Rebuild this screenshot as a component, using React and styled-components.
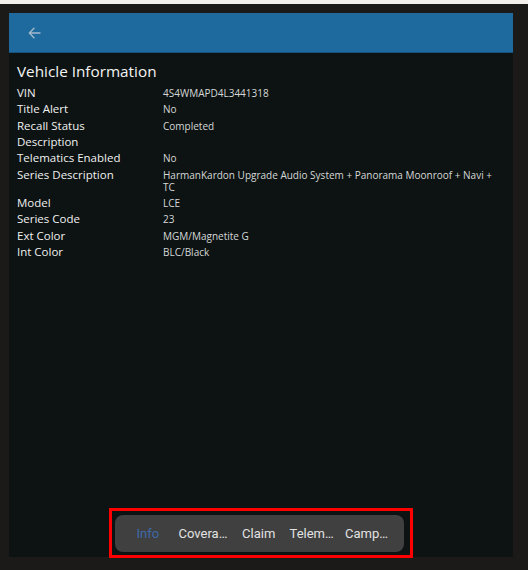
import React from "react";
import styled, { createGlobalStyle } from "styled-components";

const Global = createGlobalStyle`
  html, body { margin: 0; padding: 0; background: #1c1a19; }
  * { box-sizing: border-box; }
`;

const Page = styled.div`
  width: 528px;
  height: 570px;
  background: #1c1a19;
  border-top: 4px solid #f3f0ec;
  padding: 9px 15px 13px 9px;
  display: flex;
`;

const Screen = styled.div`
  flex: 1;
  display: flex;
  flex-direction: column;
  background: #0c1312;
  font-family: "Open Sans", "Noto Sans", sans-serif;
`;

const Header = styled.header`
  height: 40px;
  background: #1e6a9e;
  border-bottom: 1px solid #17527c;
  display: flex;
  align-items: center;
  padding-left: 18px;
  flex-shrink: 0;
`;

const BackButton = styled.button`
  border: 0;
  background: none;
  padding: 0;
  width: 14px;
  height: 14px;
  display: flex;
  align-items: center;
  justify-content: center;
`;

const Content = styled.main`
  padding: 8px 17px 0 8px;
  display: flex;
  flex-direction: column;
`;

const Title = styled.h1`
  margin: 0 0 4px;
  font-size: 15.3px;
  line-height: 20px;
  font-weight: 400;
  color: #f4f4f4;
`;

const Row = styled.div`
  display: grid;
  grid-template-columns: 146px 1fr;
  min-height: 16.33px;
`;

const Label = styled.div`
  font-size: 11.5px;
  line-height: 16.33px;
  color: #f0f0f0;
`;

const Value = styled.div`
  font-size: 10px;
  line-height: 12.5px;
  padding: 2px 0 1.3px;
  color: #d6d8d8;
`;

const Spacer = styled.div`
  flex: 1;
`;

const Annotation = styled.div`
  align-self: center;
  border: 3px solid #ff0000;
  padding: 4px 6px 3px 3px;
  margin-bottom: -1px;
`;

const TabBar = styled.nav`
  width: 289px;
  height: 37px;
  background: #404040;
  border-radius: 8px;
  display: flex;
  align-items: center;
  padding: 0 6px 0 5px;
`;

const Tab = styled.div`
  flex: 0 0 55.5px;
  padding: 0 3px;
  text-align: center;
  white-space: nowrap;
  overflow: hidden;
  text-overflow: ellipsis;
  font-family: Roboto, "Noto Sans", sans-serif;
  font-size: 13px;
  color: ${(p) => (p.$active ? "#3d6aa8" : "#e2e2e2")};
`;

const rows = [
  ["VIN", "4S4WMAPD4L3441318"],
  ["Title Alert", "No"],
  ["Recall Status", "Completed"],
  ["Description", ""],
  ["Telematics Enabled", "No"],
  ["Series Description", "HarmanKardon Upgrade Audio System + Panorama Moonroof + Navi + TC"],
  ["Model", "LCE"],
  ["Series Code", "23"],
  ["Ext Color", "MGM/Magnetite G"],
  ["Int Color", "BLC/Black"],
];

const tabs = ["Info", "Coverage", "Claim", "Telematics", "Campaign"];

export default function App() {
  return (
    <>
      <Global />
      <Page>
        <Screen>
          <Header>
            <BackButton aria-label="Back">
              <svg width="13" height="12" viewBox="0 0 13 12" fill="none" stroke="#a2b9cc" strokeWidth="1.4" strokeLinecap="round" strokeLinejoin="round">
                <path d="M12 6H1.5M6 1.3L1.3 6L6 10.7" />
              </svg>
            </BackButton>
          </Header>
          <Content>
            <Title>Vehicle Information</Title>
            {rows.map(([l, v]) => (
              <Row key={l}>
                <Label>{l}</Label>
                <Value>{v}</Value>
              </Row>
            ))}
          </Content>
          <Spacer />
          <Annotation>
            <TabBar>
              {tabs.map((t, i) => (
                <Tab key={t} $active={i === 0}>{t}</Tab>
              ))}
            </TabBar>
          </Annotation>
        </Screen>
      </Page>
    </>
  );
}
